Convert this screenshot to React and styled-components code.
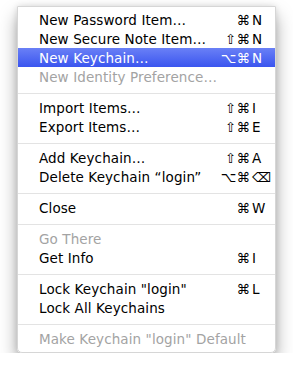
import styled, { createGlobalStyle } from 'styled-components';

const Global = createGlobalStyle`
  body {
    margin: 0;
    background: #ffffff;
    font-family: "DejaVu Sans", "Noto Sans", sans-serif;
  }
`;

const items = [
  { label: 'New Password Item…', mods: '⌘', key: 'N' },
  { label: 'New Secure Note Item…', mods: '⇧⌘', key: 'N' },
  { label: 'New Keychain…', mods: '⌥⌘', key: 'N', active: true },
  { label: 'New Identity Preference…', disabled: true },
  'sep',
  { label: 'Import Items…', mods: '⇧⌘', key: 'I' },
  { label: 'Export Items…', mods: '⇧⌘', key: 'E' },
  'sep',
  { label: 'Add Keychain…', mods: '⇧⌘', key: 'A' },
  { label: 'Delete Keychain “login”', mods: '⌥⌘', key: '⌫' },
  'sep',
  { label: 'Close', mods: '⌘', key: 'W' },
  'sep',
  { label: 'Go There', disabled: true },
  { label: 'Get Info', mods: '⌘', key: 'I' },
  'sep',
  { label: 'Lock Keychain "login"', mods: '⌘', key: 'L' },
  { label: 'Lock All Keychains' },
  'sep',
  { label: 'Make Keychain "login" Default', disabled: true },
];

export default function App() {
  return (
    <Page>
      <Global />
      <Menu>
        {items.map((it, i) =>
          it === 'sep' ? (
            <Separator key={i} />
          ) : (
            <Row key={i} $active={it.active} $disabled={it.disabled}>
              <Label>{it.label}</Label>
              {it.key && (
                <Shortcut>
                  <Mods>{it.mods}</Mods>
                  <Key>{it.key}</Key>
                </Shortcut>
              )}
            </Row>
          )
        )}
      </Menu>
    </Page>
  );
}

const Page = styled.div`
  padding: 6px 0 0 17px;
`;

const Menu = styled.div`
  width: 259px;
  box-sizing: border-box;
  background: rgba(255, 255, 255, 0.98);
  border: 1px solid #d6d6d6;
  border-radius: 0 0 5px 5px;
  padding: 3px 0 4px;
  box-shadow: 0 10px 18px rgba(0, 0, 0, 0.35), 0 0 6px rgba(0, 0, 0, 0.12);
`;

const Row = styled.div`
  display: flex;
  align-items: center;
  height: 19px;
  padding: 0 7px 0 21px;
  font-size: 13.5px;
  letter-spacing: 0.1px;
  color: ${(p) => (p.$active ? '#ffffff' : p.$disabled ? '#a3a3a3' : '#000000')};
  background: ${(p) =>
    p.$active ? 'linear-gradient(#6a80f6, #3a55ef)' : 'transparent'};
  white-space: nowrap;
`;

const Label = styled.span`
  flex: 1;
`;

const Shortcut = styled.span`
  display: flex;
`;

const Mods = styled.span`
  width: 40px;
  text-align: right;
  padding-right: 2px;
`;

const Key = styled.span`
  width: 16px;
`;

const Separator = styled.div`
  height: 1px;
  background: #e3e3e3;
  margin: 7px 0 4px;
`;
